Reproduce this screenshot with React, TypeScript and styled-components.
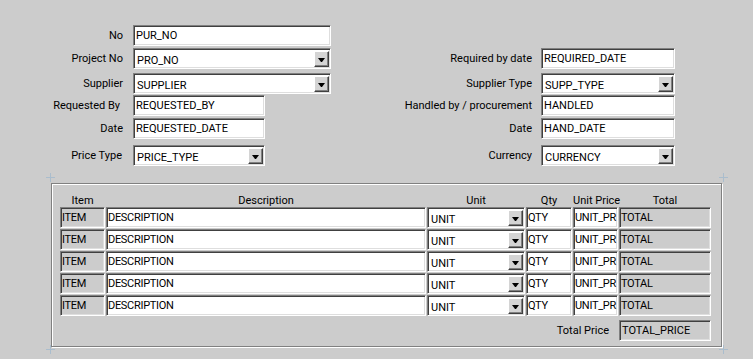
import styled, { createGlobalStyle, css } from "styled-components";

const GlobalStyle = createGlobalStyle`
  html, body {
    margin: 0;
    padding: 0;
  }
  body {
    background: #cccccc;
    font-family: Roboto, "Liberation Sans", Arial, sans-serif;
    font-size: 11px;
    color: #000;
  }
`;

const Page = styled.div`
  width: 753px;
  height: 359px;
  padding-top: 25px;
  box-sizing: border-box;
  overflow: hidden;
`;

const HeaderGrid = styled.div`
  display: grid;
  grid-template-columns: 133px 198px 210px 134px;
  grid-template-rows: 23px 25px 22px 23px 27px 21px;
  align-items: start;
`;

const Label = styled.div<{ $pad: number }>`
  height: 21px;
  display: flex;
  align-items: center;
  justify-content: flex-end;
  padding-right: ${(p) => p.$pad}px;
  white-space: nowrap;
`;

const Empty = styled.div`
  grid-column: span 2;
`;

const sunken = css`
  box-sizing: border-box;
  height: 21px;
  border: 1px solid;
  border-color: #808080 #ffffff #ffffff #808080;
  box-shadow: inset 1px 1px 0 #404040, inset -1px -1px 0 #dedede;
  display: flex;
  align-items: center;
  overflow: hidden;
  white-space: nowrap;
`;

const TextBox = styled.div<{ $w?: number; $grey?: boolean; $tight?: boolean }>`
  ${sunken}
  width: ${(p) => (p.$w ? `${p.$w}px` : "100%")};
  background: ${(p) => (p.$grey ? "#cccccc" : "#ffffff")};
  padding: ${(p) => (p.$tight ? "0 0 1px 1px" : "0 2px 1px 2px")};
  letter-spacing: ${(p) => (p.$tight ? "-0.3px" : "normal")};
`;

const SelectBox = styled.div<{ $w?: number }>`
  ${sunken}
  width: ${(p) => (p.$w ? `${p.$w}px` : "100%")};
  background: #ffffff;
  align-items: flex-start;
  padding: 2px 1px 0 3px;
`;

const SelectText = styled.span`
  flex: 1;
  padding-top: 3px;
`;

const DropButton = styled.span`
  box-sizing: border-box;
  width: 15px;
  height: 16px;
  flex: none;
  background: #d4d4d4;
  border: 1px solid;
  border-color: #ffffff #404040 #404040 #ffffff;
  box-shadow: inset -1px -1px 0 #808080;
  display: flex;
  align-items: center;
  justify-content: center;

  &::after {
    content: "";
    width: 1px;
    border-left: 3px solid transparent;
    border-right: 3px solid transparent;
    border-top: 4px solid #000;
    margin-top: 1px;
  }
`;

const Frame = styled.div`
  position: relative;
  box-sizing: border-box;
  width: 671px;
  height: 164px;
  margin: 17px 0 0 51px;
  border: 1px solid #808080;
  box-shadow: inset 1px 1px 0 #ffffff, 1px 1px 0 #ffffff;
  padding: 11px 10px 0 8px;
`;

const Corner = styled.span<{ $top?: boolean; $left?: boolean }>`
  position: absolute;
  width: 9px;
  height: 9px;
  ${(p) => (p.$top ? "top: -11px;" : "bottom: -8px;")}
  ${(p) => (p.$left ? "left: -6px;" : "right: -7px;")}

  &::before,
  &::after {
    content: "";
    position: absolute;
    background: #aabdcd;
  }
  &::before {
    left: 4px;
    top: 0;
    width: 1px;
    height: 9px;
  }
  &::after {
    top: 4px;
    left: 0;
    width: 9px;
    height: 1px;
  }
`;

const Table = styled.div`
  display: grid;
  grid-template-columns: 45px 320px 98px 46px 45px 92px;
  grid-template-rows: 11px;
  grid-auto-rows: 21px;
  column-gap: 1px;
  row-gap: 1px;
`;

const ColHead = styled.div`
  text-align: center;
  line-height: 11px;
  white-space: nowrap;
`;

const Footer = styled.div`
  width: 651px;
  display: flex;
  justify-content: flex-end;
  align-items: center;
  gap: 10px;
  margin-top: 4px;
`;

const Select = ({ value, w }: { value: string; w?: number }) => (
  <SelectBox $w={w}>
    <SelectText>{value}</SelectText>
    <DropButton />
  </SelectBox>
);

const rows = [1, 2, 3, 4, 5];

const Row = () => (
  <>
    <TextBox $grey $tight>ITEM</TextBox>
    <TextBox $tight>DESCRIPTION</TextBox>
    <Select value="UNIT" />
    <TextBox $tight>QTY</TextBox>
    <TextBox $tight>UNIT_PR</TextBox>
    <TextBox $grey $tight>TOTAL</TextBox>
  </>
);

export default function App() {
  return (
    <>
      <GlobalStyle />
      <Page>
        <HeaderGrid>
          <Label $pad={10}>No</Label>
          <TextBox $w={198}>PUR_NO</TextBox>
          <Empty />

          <Label $pad={10}>Project No</Label>
          <Select value="PRO_NO" w={198} />
          <Label $pad={9}>Required by date</Label>
          <TextBox $w={134}>REQUIRED_DATE</TextBox>

          <Label $pad={10}>Supplier</Label>
          <Select value="SUPPLIER" w={198} />
          <Label $pad={9}>Supplier Type</Label>
          <Select value="SUPP_TYPE" w={134} />

          <Label $pad={13}>Requested By</Label>
          <TextBox $w={132}>REQUESTED_BY</TextBox>
          <Label $pad={9}>Handled by / procurement</Label>
          <TextBox $w={134}>HANDLED</TextBox>

          <Label $pad={10}>Date</Label>
          <TextBox $w={132}>REQUESTED_DATE</TextBox>
          <Label $pad={9}>Date</Label>
          <TextBox $w={134}>HAND_DATE</TextBox>

          <Label $pad={11}>Price Type</Label>
          <Select value="PRICE_TYPE" w={132} />
          <Label $pad={9}>Currency</Label>
          <Select value="CURRENCY" w={134} />
        </HeaderGrid>

        <Frame>
          <Corner $top $left />
          <Corner $top />
          <Corner $left />
          <Corner />

          <Table>
            <ColHead>Item</ColHead>
            <ColHead>Description</ColHead>
            <ColHead>Unit</ColHead>
            <ColHead>Qty</ColHead>
            <ColHead>Unit Price</ColHead>
            <ColHead>Total</ColHead>

            {rows.map((r) => (
              <Row key={r} />
            ))}
          </Table>

          <Footer>
            <span>Total Price</span>
            <TextBox $w={92} $grey>
              TOTAL_PRICE
            </TextBox>
          </Footer>
        </Frame>
      </Page>
    </>
  );
}
